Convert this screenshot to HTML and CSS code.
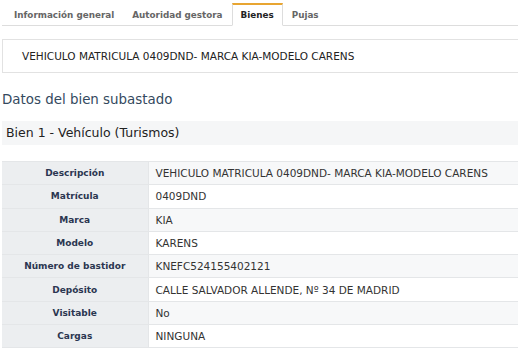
FILE: index.html
```html
<!DOCTYPE html>
<html lang="es">
<head>
    <meta charset="UTF-8">
    <title>Bienes</title>
    <link rel="stylesheet" href="styles.css">
</head>
<body>
    <div class="page">
        <ul class="tabs">
            <li class="tab">Información general</li>
            <li class="tab">Autoridad gestora</li>
            <li class="tab active">Bienes</li>
            <li class="tab">Pujas</li>
        </ul>
        <div class="summary">VEHICULO MATRICULA 0409DND- MARCA KIA-MODELO CARENS</div>
        <h2 class="section-title">Datos del bien subastado</h2>
        <h3 class="item-title">Bien 1 - Vehículo (Turismos)</h3>
        <table class="details">
            <tr><th>Descripción</th><td>VEHICULO MATRICULA 0409DND- MARCA KIA-MODELO CARENS</td></tr>
            <tr><th>Matrícula</th><td>0409DND</td></tr>
            <tr><th>Marca</th><td>KIA</td></tr>
            <tr><th>Modelo</th><td>KARENS</td></tr>
            <tr><th>Número de bastidor</th><td>KNEFC524155402121</td></tr>
            <tr><th>Depósito</th><td>CALLE SALVADOR ALLENDE, Nº 34 DE MADRID</td></tr>
            <tr><th>Visitable</th><td>No</td></tr>
            <tr><th>Cargas</th><td>NINGUNA</td></tr>
        </table>
    </div>
</body>
</html>
```

FILE: styles.css
```css
* {
    margin: 0;
    padding: 0;
    box-sizing: border-box;
}

body {
    font-family: "DejaVu Sans", Verdana, sans-serif;
    background-color: #fff;
    color: #333;
    overflow: hidden;
}

.page {
    width: 540px;
    padding-left: 2px;
}

.tabs {
    list-style: none;
    display: flex;
    padding-left: 3px;
    margin-top: 3px;
    border-bottom: 1px solid #ddd;
}

.tab {
    font-size: 8.8px;
    line-height: 11px;
    font-weight: bold;
    color: #666;
    padding: 5px 8px 4px;
    border: 1px solid transparent;
    border-top-width: 2px;
    margin-bottom: -1px;
}

.tab.active {
    color: #222;
    background-color: #fff;
    border-color: #ddd;
    border-top-color: #e8a531;
    border-bottom-color: #fff;
}

.summary {
    margin-top: 13px;
    height: 34px;
    line-height: 32px;
    border: 1px solid #e2e2e2;
    border-right: none;
    padding-left: 19px;
    font-size: 10.5px;
    color: #222;
}

.section-title {
    font-size: 13.4px;
    line-height: 16px;
    font-weight: normal;
    color: #34495e;
    margin-top: 19px;
}

.item-title {
    font-size: 12.5px;
    font-weight: normal;
    color: #222;
    background-color: #f5f6f7;
    height: 24px;
    line-height: 24px;
    padding-left: 4px;
    margin-top: 13px;
}

.details {
    margin-top: 16px;
    width: 516px;
    border-collapse: collapse;
    font-size: 10.5px;
}

.details tr {
    height: 23.3px;
    border-top: 1px solid #e4e6e8;
    border-bottom: 1px solid #e4e6e8;
}

.details th {
    width: 146px;
    background-color: #eceef0;
    color: #2b3650;
    font-size: 9px;
    font-weight: bold;
    text-align: center;
    border-right: 1px solid #e4e6e8;
}

.details td {
    color: #333;
    padding-left: 7px;
}

.details tr:nth-child(odd) td {
    background-color: #f7f8f9;
}
```
